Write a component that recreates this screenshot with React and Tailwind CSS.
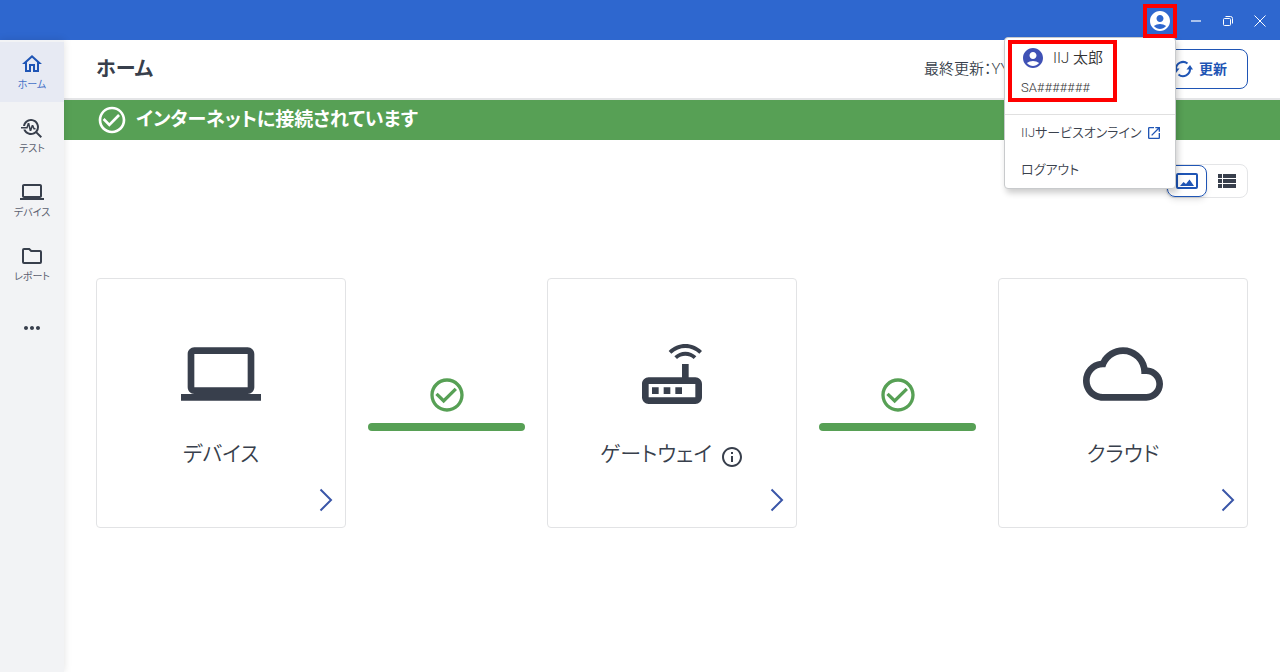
import React, { useState } from "react";
import {
  MdAccountCircle,
  MdCheckCircleOutline,
  MdInfoOutline,
  MdLaptop,
  MdMoreHoriz,
  MdOpenInNew,
  MdOutlineCloudQueue,
  MdOutlineHome,
  MdOutlineRouter,
  MdTroubleshoot,
  MdViewList,
} from "react-icons/md";

const FolderIcon = ({ size = 24 }) => (
  <svg width={size} height={size} viewBox="0 0 24 24" fill="none" stroke="currentColor" strokeWidth="2">
    <path d="M4 5h5.200l2 2H20a1 1 0 0 1 1 1v10a1 1 0 0 1-1 1H4a1 1 0 0 1-1-1V6a1 1 0 0 1 1-1z" />
  </svg>
);

const RefreshIcon = () => (
  <svg width="20" height="20" viewBox="0 0 20 20" fill="none" stroke="currentColor" strokeWidth="2">
    <path d="M3 10a7 7 0 0 1 11.500-5.400" />
    <path d="M17 9.500a7 7 0 0 1-11.500 5.900" />
    <path d="M13.500 10.500 17 6l3 4.500z" fill="currentColor" stroke="none" />
    <path d="M0 9.500h6.500L3 14z" fill="currentColor" stroke="none" />
  </svg>
);

const PictureIcon = () => (
  <svg width="22" height="16" viewBox="0 0 22 16" fill="none">
    <rect x="1" y="1" width="20" height="14" rx="1" stroke="currentColor" strokeWidth="2" />
    <path d="M4 13l3.500-4 2.500 2 3.500-4.500L18 13z" fill="currentColor" />
  </svg>
);

const ChevronIcon = () => (
  <svg width="14" height="24" viewBox="0 0 14 24" fill="none" stroke="currentColor" strokeWidth="2">
    <path d="M1.500 1.500 12 12 1.500 22.500" />
  </svg>
);

const navItems = [
  { id: "home", label: "ホーム", icon: MdOutlineHome },
  { id: "test", label: "テスト", icon: MdTroubleshoot },
  { id: "device", label: "デバイス", icon: MdLaptop },
  { id: "report", label: "レポート", icon: FolderIcon },
];

const AccountMenu = () => (
  <div className="absolute top-[33px] right-px z-30 w-[172px] rounded border border-[#c8cacc] bg-white text-[13px] font-[350] text-[#3a414d] shadow-[2px_4px_6px_rgba(0,0,0,0.2)]">
    <div className="h-[77px] border-b border-[#e0e0e0] px-[3px] pt-[2px]">
      <div className="h-[62px] w-[109px] border-4 border-[#ff0000] pl-[9px] text-[#333333]">
        <div className="flex h-7 items-center gap-2">
          <MdAccountCircle size={24} className="shrink-0 text-[#3f51b5]" />
          <span className="text-[15px] leading-6 whitespace-nowrap">IIJ 太郎</span>
        </div>
        <p className="leading-8">SA#######</p>
      </div>
    </div>
    <a href="#service" className="flex h-9 items-center gap-1 pl-4 whitespace-nowrap">
      IIJサービスオンライン
      <MdOpenInNew size={16} className="text-[#1f55b5]" />
    </a>
    <button type="button" className="flex h-[37px] w-full items-center pl-4">
      ログアウト
    </button>
  </div>
);

const TitleBar = ({ menuOpen, onToggleMenu }) => (
  <header className="flex h-10 justify-end bg-[#2e67cf] text-white">
    <div className="relative mt-1 mr-[3px]">
      <button
        type="button"
        aria-label="アカウント"
        aria-expanded={menuOpen}
        onClick={onToggleMenu}
        className="relative z-40 flex h-[34px] w-[34px] items-center justify-center border-4 border-[#ff0000]"
      >
        <MdAccountCircle size={24} className="shrink-0" />
      </button>
      {menuOpen && <AccountMenu />}
    </div>
    <button type="button" aria-label="最小化" className="flex w-8 items-center justify-center pt-[2px]">
      <svg width="10" height="10" viewBox="0 0 10 10" stroke="currentColor" strokeOpacity=".6">
        <path d="M0 5h10" strokeWidth="2" />
      </svg>
    </button>
    <button type="button" aria-label="元に戻す" className="flex w-8 items-center justify-center pt-[2px]">
      <svg width="10" height="10" viewBox="0 0 10 10" fill="none" stroke="currentColor">
        <rect x=".5" y="2.500" width="7" height="7" rx="1" />
        <path d="M2.500.5h5a2 2 0 0 1 2 2v5" />
      </svg>
    </button>
    <button type="button" aria-label="閉じる" className="mr-1 flex w-8 items-center justify-center pt-[2px]">
      <svg width="12" height="12" viewBox="0 0 12 12" stroke="currentColor">
        <path d="M.5.5l11 11M11.500.5l-11 11" />
      </svg>
    </button>
  </header>
);

const Sidebar = ({ active, onSelect }) => (
  <nav className="z-10 w-16 shrink-0 bg-[#f2f3f5] pt-[2px] shadow-[0_0_8px_rgba(0,0,0,0.12)]">
    {navItems.map(({ id, label, icon: Icon }) => (
      <button
        key={id}
        type="button"
        onClick={() => onSelect(id)}
        className={`mb-1 flex h-[60px] w-full flex-col items-center pt-[10px] ${
          active === id ? "bg-[#e7eaf3] text-[#1f55b5]" : "text-[#383f4c]"
        }`}
      >
        <Icon size={24} />
        <span className={`text-[10px] leading-[18px] ${active === id ? "text-[#4673c8]" : "text-[#5a6070]"}`}>
          {label}
        </span>
      </button>
    ))}
    <button type="button" aria-label="その他" className="flex h-[60px] w-full items-center justify-center">
      <MdMoreHoriz size={24} className="text-[#383f4c]" />
    </button>
  </nav>
);

const StatusCard = ({ icon: Icon, label, info }) => (
  <section className="flex h-[250px] w-[250px] shrink-0 flex-col items-center rounded border border-[#e2e3e5] bg-white pt-[55px]">
    <Icon size={80} className="shrink-0" />
    <div className="mt-6 flex h-[34px] items-center gap-2">
      <h2 className="text-[21px] font-[350]">{label}</h2>
      {info && (
        <button type="button" aria-label="詳細情報" className="pt-1">
          <MdInfoOutline size={24} />
        </button>
      )}
    </div>
    <a href="#detail" aria-label={label} className="mt-4 mr-3 self-end text-[#3a56a8]">
      <ChevronIcon />
    </a>
  </section>
);

const Connection = () => (
  <div className="mx-[22px] flex flex-1 flex-col items-center gap-2 text-[#57a055]">
    <MdCheckCircleOutline size={40} />
    <div className="h-2 w-full rounded-full bg-[#57a055]" />
  </div>
);

const App = () => {
  const [menuOpen, setMenuOpen] = useState(true);
  const [active, setActive] = useState("home");
  const [view, setView] = useState("picture");

  return (
    <div className="flex min-h-screen flex-col bg-white font-[Roboto,'Noto_Sans_CJK_JP',sans-serif] text-[#383f4c] [font-feature-settings:'palt']">
      <TitleBar menuOpen={menuOpen} onToggleMenu={() => setMenuOpen(!menuOpen)} />

      <div className="flex flex-1">
        <Sidebar active={active} onSelect={setActive} />

        <main className="min-w-0 flex-1">
          {/* Page heading */}
          <div className="flex h-[60px] items-center justify-between border-b-2 border-[#e4e5e7] px-8">
            <h1 className="text-xl font-bold">ホーム</h1>
            <div className="flex items-center gap-4">
              <span className="w-[220px] text-[15px] leading-6 font-[350] whitespace-nowrap">最終更新：YYYY</span>
              <button
                type="button"
                className="flex h-10 items-center gap-[6px] rounded-lg border border-[#1f55b5] pr-5 pl-3 text-sm font-bold text-[#1f55b5]"
              >
                <RefreshIcon />
                更新
              </button>
            </div>
          </div>

          {/* Connection status */}
          <div className="flex h-10 items-center gap-2 bg-[#57a055] px-8 text-white">
            <MdCheckCircleOutline size={32} />
            <p className="text-[19px] font-bold">インターネットに接続されています</p>
          </div>

          <div className="flex justify-end px-8 pt-6">
            <div className="flex h-[34px] items-center rounded-lg border border-[#e4e5e7]">
              <button
                type="button"
                aria-label="図で表示"
                aria-pressed={view === "picture"}
                onClick={() => setView("picture")}
                className="flex h-8 w-10 items-center justify-center rounded-lg border border-[#1f55b5] text-[#1f55b5] shadow-md"
              >
                <PictureIcon />
              </button>
              <button
                type="button"
                aria-label="一覧で表示"
                aria-pressed={view === "list"}
                onClick={() => setView("list")}
                className="flex h-8 w-10 items-center justify-center"
              >
                <MdViewList size={24} />
              </button>
            </div>
          </div>

          <div className="mt-20 flex items-center px-8">
            <StatusCard icon={MdLaptop} label="デバイス" />
            <Connection />
            <StatusCard icon={MdOutlineRouter} label="ゲートウェイ" info />
            <Connection />
            <StatusCard icon={MdOutlineCloudQueue} label="クラウド" />
          </div>
        </main>
      </div>
    </div>
  );
};

export default App;
